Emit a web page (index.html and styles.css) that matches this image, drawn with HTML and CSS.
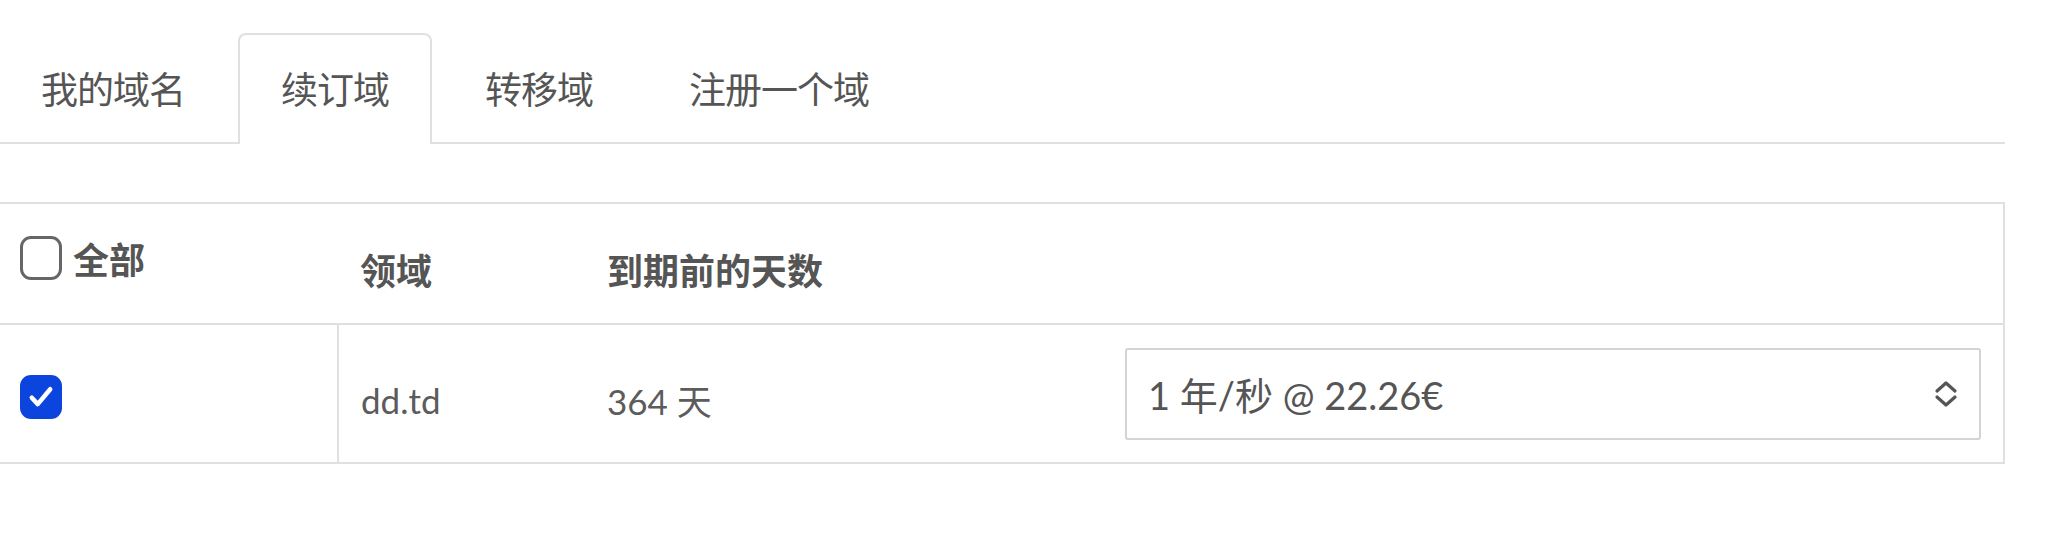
FILE: index.html
```html
<!DOCTYPE html>
<html lang="zh">
<head>
    <meta charset="UTF-8">
    <title>续订域</title>
    <link rel="stylesheet" href="styles.css">
</head>
<body>
    <ul class="tabs">
        <li class="tab">我的域名</li>
        <li class="tab active">续订域</li>
        <li class="tab">转移域</li>
        <li class="tab">注册一个域</li>
    </ul>

    <table class="renew-table">
        <colgroup>
            <col class="col-check">
            <col class="col-domain">
            <col class="col-days">
            <col>
        </colgroup>
        <thead>
            <tr class="head-row">
                <th class="th-all">
                    <label class="check-label">
                        <span class="box"></span>全部
                    </label>
                </th>
                <th>领域</th>
                <th>到期前的天数</th>
                <th></th>
            </tr>
        </thead>
        <tbody>
            <tr class="body-row">
                <td class="cell-check">
                    <span class="box checked">
                        <svg viewBox="0 0 24 24" width="34" height="34">
                            <path d="M5.5 12.5l4.2 4.5L18.5 6.5" fill="none" stroke="#fff" stroke-width="3.2" stroke-linecap="round" stroke-linejoin="round"/>
                        </svg>
                    </span>
                </td>
                <td class="cell-text">dd.td</td>
                <td class="cell-text">364 天</td>
                <td>
                    <div class="period">
                        <span>1 年/秒 @ 22.26€</span>
                        <svg class="chevrons" viewBox="0 0 24 28" width="24" height="28">
                            <path d="M3 11l9-8 9 8M3 17l9 8 9-8" fill="none" stroke="#555" stroke-width="3.2" stroke-linecap="round" stroke-linejoin="round"/>
                        </svg>
                    </div>
                </td>
            </tr>
        </tbody>
    </table>
</body>
</html>
```

FILE: styles.css
```css
body {
    margin: 0;
    font-family: 'Lato', 'Noto Sans CJK SC', sans-serif;
    color: #555;
    background: #fff;
}

.tabs {
    display: flex;
    list-style: none;
    margin: 0 0 0 -2px;
    padding: 33px 0 0 0;
    width: 2007px;
    border-bottom: 2px solid #e0e0e0;
}

.tab {
    padding: 0 41px;
    margin-right: 10px;
    height: 107px;
    line-height: 110px;
    font-size: 37px;
    letter-spacing: -1px;
    border: 2px solid transparent;
    border-bottom: none;
    color: #555;
}

.tab.active {
    border-color: #e0e0e0;
    border-radius: 8px 8px 0 0;
    background: #fff;
    margin-bottom: -2px;
    height: 109px;
}

.renew-table {
    margin-top: 58px;
    width: 2005px;
    table-layout: fixed;
    border-collapse: collapse;
    border: 2px solid #e0e0e0;
    border-left: none;
}

.col-check { width: 338px; }
.col-domain { width: 247px; }
.col-days { width: 518px; }

.head-row {
    height: 121px;
}

th {
    padding: 10px 0 0 22px;
    text-align: left;
    font-size: 36px;
    font-weight: 700;
    color: #555;
    vertical-align: middle;
}

th.th-all {
    padding: 0 0 12px 20px;
}

.check-label {
    display: flex;
    align-items: center;
    gap: 11px;
}

.box {
    display: inline-flex;
    align-items: center;
    justify-content: center;
    box-sizing: border-box;
    width: 42px;
    height: 44px;
    border: 3px solid #666;
    border-radius: 11px;
}

.box.checked {
    background: #0b45de;
    border-color: #0b45de;
}

.body-row {
    height: 139px;
    border-top: 2px solid #e0e0e0;
}

td {
    padding: 0 22px;
    font-size: 35px;
    color: #5c5c5c;
    vertical-align: middle;
}

td.cell-text {
    padding-top: 12px;
}

td.cell-check {
    padding: 8px 0 0 20px;
    border-right: 2px solid #e0e0e0;
}

.period {
    display: flex;
    align-items: center;
    justify-content: space-between;
    box-sizing: border-box;
    height: 92px;
    padding: 0 21px 0 21px;
    border: 2px solid #d4d4d4;
    border-radius: 3px;
    font-size: 38px;
    color: #555;
}
```
